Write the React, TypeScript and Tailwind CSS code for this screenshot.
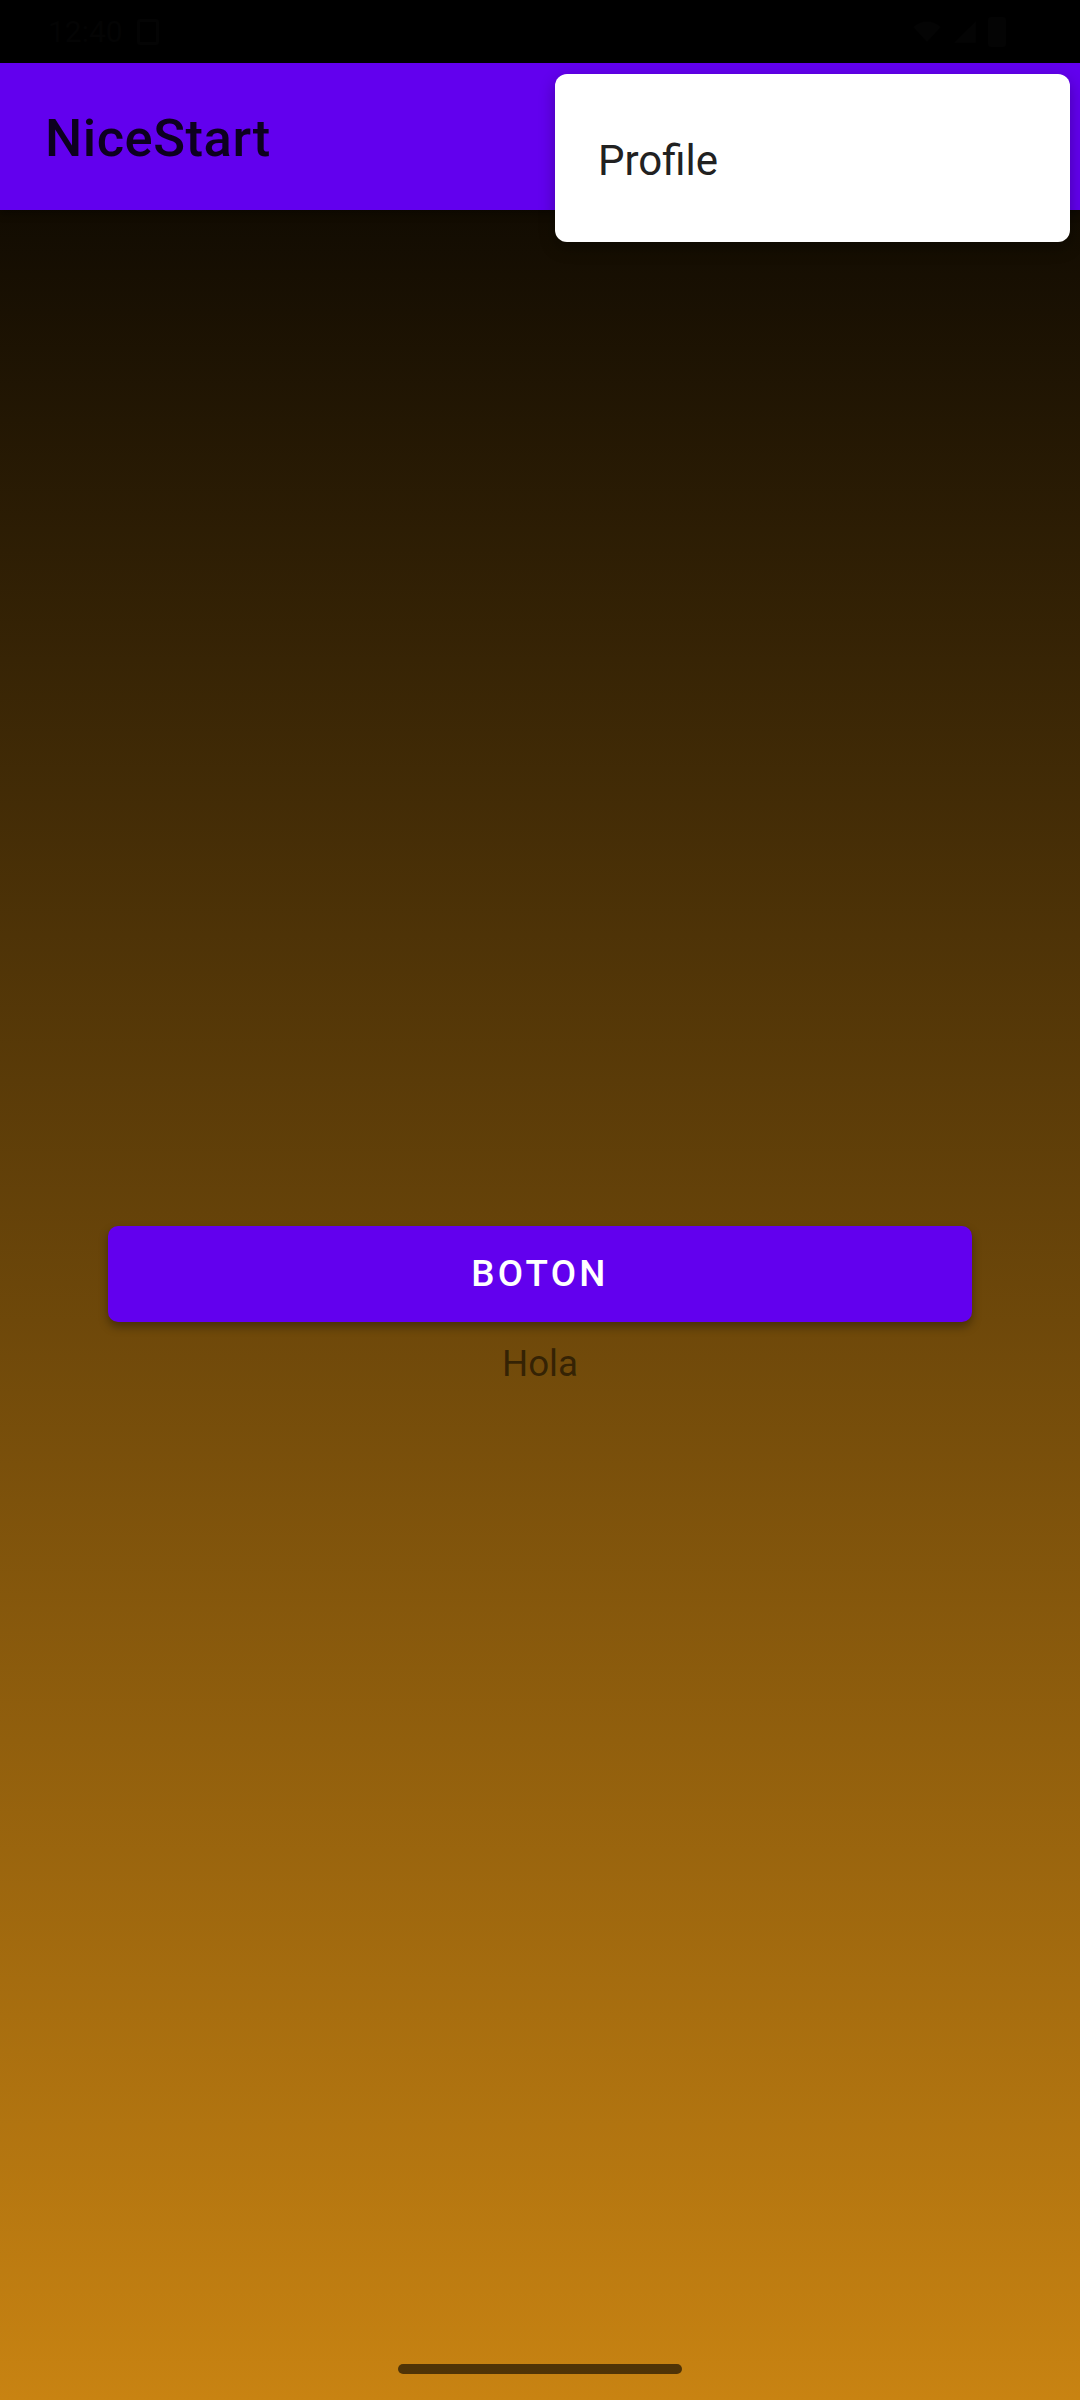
import React from "react";

export default function App() {
  return (
    <div
      className="relative w-[1080px] h-[2400px] flex flex-col overflow-hidden bg-[linear-gradient(to_bottom,#000000_0%,#c88312_100%)]"
      style={{ fontFamily: "Roboto, 'Noto Sans', sans-serif" }}
    >
      {/* Status bar */}
      <div className="h-[63px] bg-black flex items-center justify-between px-[48px] shrink-0">
        <div className="flex items-center gap-[14px] text-[#040404] text-[30px] leading-none">
          <span>12:40</span>
          <span className="w-[22px] h-[26px] border-[3px] border-[#040404] rounded-[3px]" />
        </div>
        <div className="flex items-center gap-[10px] mr-[26px]">
          <svg width="30" height="30" viewBox="0 0 24 24" fill="#040404">
            <path d="M12 20 1 8a16 16 0 0 1 22 0z" />
          </svg>
          <svg width="26" height="26" viewBox="0 0 24 24" fill="#040404">
            <path d="M22 2v20H2z" />
          </svg>
          <div className="w-[18px] h-[30px] rounded-[3px] bg-[#040404]" />
        </div>
      </div>

      {/* App bar */}
      <div className="h-[147px] bg-[#6200ee] flex items-center px-[45px] pt-[4px] shrink-0 shadow-[0_4px_8px_rgba(0,0,0,0.3)]">
        <span className="text-[52.5px] leading-none text-black/[0.87] font-medium tracking-[0.01em]">NiceStart</span>
      </div>

      {/* Content */}
      <div className="flex-1 flex flex-col items-center justify-center">
        <button className="w-[864px] h-[96px] rounded-[10px] bg-[#6200ee] text-white text-[36.75px] font-medium tracking-[0.09em] uppercase shadow-[0_5px_10px_rgba(0,0,0,0.35)] flex items-center justify-center">
          Boton
        </button>
        <div className="mt-[20px] text-[36.75px] leading-[43px] text-black/[0.55]">Hola</div>
      </div>

      {/* Home indicator (overlay) */}
      <div className="absolute left-[398px] top-[2364px] w-[284px] h-[10px] rounded-full bg-black/60" />

      {/* Overflow menu */}
      <div className="absolute left-[555px] top-[74px] w-[515px] h-[168px] bg-white rounded-[12px] shadow-[0_6px_16px_rgba(0,0,0,0.3)] flex items-center pl-[43px] pt-[6px]">
        <span className="text-[42px] leading-none text-[#212121]">Profile</span>
      </div>
    </div>
  );
}
